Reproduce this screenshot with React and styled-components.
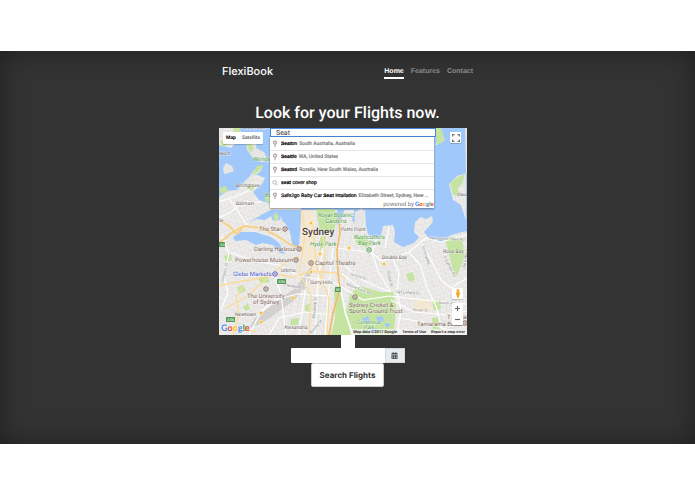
import React, { useState } from 'react';
import styled, { createGlobalStyle } from 'styled-components';
import { FaCalendarAlt } from 'react-icons/fa';

const GlobalStyle = createGlobalStyle`
  * {
    box-sizing: border-box;
  }

  body {
    margin: 0;
    background: #ffffff;
    font-family: Roboto, "Liberation Sans", sans-serif;
    text-rendering: geometricPrecision;
  }

  button, input {
    font-family: inherit;
    text-rendering: inherit;
    margin: 0;
  }
`

const Page = styled.div`
  padding: 51px 0;
`

const Cover = styled.div`
  display: flex;
  justify-content: center;
  padding: 13px 0 57px;
  background: #333333;
  box-shadow: inset 0 0 28px rgba(0, 0, 0, 0.38);
  color: #ffffff;
`

const Column = styled.div`
  display: flex;
  flex-direction: column;
  width: 100%;
  max-width: 257px;
`

const Header = styled.header`
  display: flex;
  justify-content: space-between;
  align-items: flex-start;
  padding: 0 3px;
  margin-bottom: 24px;
`

const Brand = styled.h3`
  margin: 0;
  font-family: Inter, sans-serif;
  font-size: 11px;
  line-height: 14px;
  font-weight: 500;
`

const Nav = styled.nav`
  display: flex;
  gap: 7px;
`

const NavItem = styled.a`
  padding: 3px 0 1px;
  border-bottom: 2px solid ${props => props.$active ? '#ffffff' : 'transparent'};
  color: ${props => props.$active ? '#ffffff' : '#8a8a8a'};
  font-family: "Liberation Sans", Arial, sans-serif;
  font-size: 7px;
  line-height: 9px;
  font-weight: 700;
  text-decoration: none;
`

const Title = styled.h1`
  margin: 0;
  padding-bottom: 5px;
  font-size: 16px;
  line-height: 20px;
  font-weight: 500;
  text-align: center;
`

const MapBox = styled.div`
  position: relative;
  width: 100%;
  max-width: 248px;
  overflow: hidden;

  > svg {
    display: block;
    width: 100%;
  }
`

const MapLabel = styled.text`
  font-family: Roboto, sans-serif;
  font-size: ${props => props.$size || 6}px;
  font-weight: ${props => props.$bold ? 500 : 400};
  font-style: ${props => props.$park ? 'italic' : 'normal'};
  fill: ${props => props.$color || '#6b5f57'};
  stroke: rgba(255, 255, 255, 0.6);
  stroke-width: 1px;
  paint-order: stroke;
`

const Control = styled.div`
  position: absolute;
  display: flex;
  background: #ffffff;
  border-radius: 1px;
  box-shadow: 0 1px 1px rgba(0, 0, 0, 0.2);
`

const MapTypes = styled(Control)`
  top: 4px;
  left: 4px;
`

const Corner = styled(Control)`
  top: 4px;
  right: 6px;
`

const SideControls = styled.div`
  position: absolute;
  right: 4px;
  bottom: 10px;
  display: flex;
  flex-direction: column;
  gap: 4px;

  > div {
    position: static;
    flex-direction: column;
  }
`

const TypeButton = styled.button`
  height: 12px;
  padding: 0 3px;
  border: 0;
  background: none;
  color: ${props => props.$active ? '#000000' : '#565656'};
  font-size: 5px;
  font-weight: ${props => props.$active ? 700 : 500};
`

const IconButton = styled.button`
  display: flex;
  align-items: center;
  justify-content: center;
  width: 11px;
  height: 11px;
  padding: 0;
  border: 0;
  background: none;
`

const Legal = styled.div`
  position: absolute;
  right: 0;
  bottom: 0;
  display: flex;
  gap: 5px;
  padding: 0 2px;
  background: rgba(245, 245, 245, 0.7);
  color: #333333;
  font-size: 4px;
  line-height: 6px;
  font-weight: 700;
  white-space: nowrap;

  a {
    color: inherit;
    text-decoration: none;
  }
`

const MapLogo = styled.div`
  position: absolute;
  left: 2px;
  bottom: 0;
`

const Logo = styled.span`
  font-family: Lato, sans-serif;
  font-size: ${props => props.$size}px;
  line-height: ${props => props.$size + 2}px;
  font-weight: 700;
  text-shadow: ${props => props.$halo ? '0 0 1px #ffffff, 0 0 2px #ffffff' : 'none'};
`

const Letter = styled.span`
  color: ${props => props.$color};
`

const Autocomplete = styled.div`
  position: absolute;
  top: 0;
  left: 51px;
  width: 166px;
`

const PlaceInput = styled.input`
  display: block;
  width: 100%;
  height: 9px;
  padding: 0 5px;
  border: 1px solid #4285d8;
  border-radius: 0;
  outline: 0;
  background: #ffffff;
  color: #333333;
  font-size: 7px;
  line-height: 7px;
`

const Suggestions = styled.div`
  margin-right: 2px;
  padding-top: 1px;
  background: #ffffff;
  box-shadow: 0 1px 2px rgba(0, 0, 0, 0.4);
`

const List = styled.ul`
  margin: 0;
  padding: 0;
  list-style: none;
`

const Suggestion = styled.li`
  display: flex;
  align-items: center;
  gap: 3px;
  height: 13px;
  padding: 0 1px 0 2px;
  border-bottom: 1px solid #e6e6e6;
  color: #000000;
  font-family: "Liberation Sans", Arial, sans-serif;
  font-size: 5px;

  &:last-child {
    border-bottom: 0;
    height: 12px;
  }

  svg {
    flex: none;
  }
`

const SuggestionText = styled.span`
  overflow: hidden;
  white-space: nowrap;
  -webkit-text-stroke: 0.2px currentColor;

  small {
    margin-left: 2px;
    color: #808080;
    font-family: Roboto, sans-serif;
    font-size: 5px;
  }
`

const Powered = styled.div`
  display: flex;
  justify-content: flex-end;
  align-items: center;
  gap: 1px;
  height: 6px;
  color: #777777;
  font-size: 6px;
  line-height: 6px;
`

const Form = styled.form`
  display: flex;
  flex-direction: column;
  align-items: center;
`

const SmallInput = styled.input`
  width: 14px;
  height: 13px;
  padding: 0;
  border: 0;
  background: #ffffff;
`

const DateGroup = styled.div`
  display: flex;
  width: 114px;
  height: 15px;
  border-radius: 1px;
  overflow: hidden;
`

const DateInput = styled.input`
  flex: 1;
  min-width: 0;
  padding: 0 4px;
  border: 0;
  background: #ffffff;
  font-size: 6px;
`

const DateButton = styled.button`
  display: flex;
  align-items: center;
  justify-content: center;
  width: 20px;
  padding: 0;
  border: 1px solid #d5d8db;
  background: #e9ecef;
  color: #495057;
`

const SearchButton = styled.button`
  height: 24px;
  padding: 0 8px;
  border: 1px solid #cccccc;
  border-radius: 2px;
  background: #ffffff;
  color: #333333;
  font-family: Inter, sans-serif;
  font-size: 8px;
  font-weight: 700;
  white-space: nowrap;
`

const letters = [
  ['G', '#4285f4'],
  ['o', '#ea4335'],
  ['o', '#fbbc05'],
  ['g', '#4285f4'],
  ['l', '#34a853'],
  ['e', '#ea4335'],
]

const GoogleLogo = ({ size, halo }) => (
  <Logo $size={size} $halo={halo}>
    {letters.map(([char, color], i) => <Letter key={i} $color={color}>{char}</Letter>)}
  </Logo>
)

const suggestions = [
  { icon: 'pin', match: 'Seat', after: 'on', place: 'South Australia, Australia' },
  { icon: 'pin', match: 'Seat', after: 'tle', place: 'WA, United States' },
  { icon: 'pin', match: 'Seat', after: 'ed', place: 'Rozelle, New South Wales, Australia' },
  { icon: 'search', match: 'seat', after: ' cover shop' },
  { icon: 'pin', before: 'Safe2go Baby Car ', match: 'Seat', after: ' Intallation', place: 'Elizabeth Street, Sydney, New ...' },
]

const brown = '#7d5f54'
const green = '#4c9a4a'

const labels = [
  { x: -3, y: 27, text: 'olwich', size: 5 },
  { x: 34, y: 33, text: 'Wendy', color: green, park: true },
  { x: 46, y: 69, text: 'Ba', color: green, park: true },
  { x: 17, y: 59, text: 'Birchgrove', size: 5 },
  { x: 17, y: 77, text: 'Balmain', size: 5 },
  { x: -2, y: 94, text: 'ille', size: 5 },
  { x: 24, y: 1, text: 'Greenwich', size: 5 },
  { x: 238, y: 68, text: 'Vaucluse', size: 5 },
  { x: 99, y: 89, text: 'Royal Botanic', size: 6, color: green, park: true },
  { x: 106, y: 95, text: 'Gardens', size: 6, color: green, park: true },
  { x: 40, y: 103, text: 'The Star', color: brown },
  { x: 83, y: 107, text: 'Sydney', size: 10, color: '#4a4038', bold: true },
  { x: 122, y: 103, text: 'Potts Point', size: 5 },
  { x: 135, y: 111, text: 'Rushcutters', size: 6, color: green, park: true },
  { x: 139, y: 117, text: 'Bay Park', size: 6, color: green, park: true },
  { x: 91, y: 118, text: 'Hyde Park', size: 6, color: green, park: true },
  { x: 35, y: 123, text: 'Darling Harbour', color: brown },
  { x: 16, y: 134, text: 'Powerhouse Museum', color: brown },
  { x: 62, y: 144, text: 'Ultimo', size: 5 },
  { x: 96, y: 137, text: 'Capitol Theatre', color: brown },
  { x: 14, y: 148, text: 'Glebe Markets', color: '#4a56d0' },
  { x: 163, y: 131, text: 'Double Bay', size: 5 },
  { x: 224, y: 125, text: 'Rose Bay', size: 5 },
  { x: 91, y: 156, text: 'Surry Hills', size: 5 },
  { x: 28, y: 170, text: 'The University', color: brown },
  { x: 34, y: 176, text: 'of Sydney', color: brown },
  { x: 16, y: 188, text: 'Newtown', size: 5 },
  { x: 65, y: 201, text: 'Alexandria', size: 5 },
  { x: 130, y: 179, text: 'Sydney Cricket &', color: brown },
  { x: 130, y: 185, text: 'Sports Ground Trust', color: brown },
  { x: 138, y: 196, text: 'Centennial', size: 5, color: green },
  { x: 145, y: 201, text: 'Park', size: 5, color: green },
  { x: 198, y: 198, text: 'Tamarama Beach', color: brown },
  { x: 228, y: 191, text: 'T', color: brown },
  { x: 244, y: 191, text: 'ar', color: brown },
]

const streets = [
  { x: 65, y: 158, turn: 10, text: 'Cleveland St' },
  { x: 96, y: 190, turn: -84, text: 'Elizabeth St' },
  { x: 92, y: 206, turn: -48, text: 'Bourke St' },
  { x: 131, y: 147, turn: 18, text: 'Oxford St' },
  { x: 127, y: 157, turn: 22, text: 'Moore Park Rd' },
  { x: 177, y: 165, turn: 4, text: 'Sef Enfield Dr' },
  { x: 194, y: 183, turn: 3, text: 'Birrell St' },
  { x: 220, y: 176, turn: 2, text: 'Bondi Rd' },
  { x: 168, y: 143, turn: 78, text: 'Ocean St' },
  { x: 203, y: 118, turn: 74, text: 'Victoria Rd' },
  { x: 224, y: 129, turn: 62, text: "O'Sullivan Rd" },
  { x: 210, y: 111, turn: 3, text: 'New South Head Rd' },
  { x: 4, y: 156, turn: -76, text: 'Johnston St' },
  { x: 246, y: 141, turn: -80, text: 'Old S Head' },
]

const pois = [
  [66, 101, brown],
  [80, 121, brown],
  [77, 132, brown],
  [92, 135, brown],
  [56, 146, '#4a56d0'],
  [47, 161, brown],
  [136, 169, brown],
  [246, 195, brown],
  [150, 122, '#4c9a4a'],
]

const stations = [[92, 95], [130, 120], [101, 126], [165, 136], [92, 144], [74, 170], [42, 185], [42, 194]]

const shields = [[0, 114, 'A4'], [58, 151, 'A36'], [116, 159, 'M1'], [7, 189, 'A36'], [24, 198, 'M1']]

const SydneyMap = () => (
  <svg viewBox="0 0 248 207" aria-hidden="true">
    <defs>
      <pattern id="inner" width="7" height="8" patternUnits="userSpaceOnUse" patternTransform="rotate(8)">
        <path d="M0 0H7M0 0V8M3 3V8M0 4H3" stroke="#f8f8f7" strokeWidth="0.7" fill="none" />
      </pattern>
      <pattern id="west" width="8" height="7" patternUnits="userSpaceOnUse" patternTransform="rotate(-24)">
        <path d="M0 0H8M0 0V7M4 0V4M4 4H8" stroke="#f8f8f7" strokeWidth="0.7" fill="none" />
      </pattern>
      <pattern id="east" width="7" height="9" patternUnits="userSpaceOnUse" patternTransform="rotate(-14)">
        <path d="M0 0H7M0 0V9M4 0V6M4 6H7" stroke="#f8f8f7" strokeWidth="0.7" fill="none" />
      </pattern>
    </defs>

    <rect width="248" height="207" fill="#e6e5e3" />
    <path d="M0 0H80V100L62 207H0Z" fill="url(#west)" />
    <path d="M80 60L150 90L134 207H62L80 100Z" fill="url(#inner)" />
    <path d="M150 60H248V207H134Z" fill="url(#east)" />

    {/* built-up blocks */}
    <g fill="#f5e8d2">
      <path d="M82 82L95 82L98 138L90 150L82 120Z" />
      <path d="M195 173L208 171L214 180L204 187L195 182Z" />
      <path d="M90 152L104 150L103 166L92 164Z" opacity="0.6" />
    </g>
    <path d="M94 136L76 160L60 172L36 190L30 200L42 196L76 172L90 152Z" fill="#d2d1cf" />

    {/* harbour */}
    <g fill="#a0c8fb">
      <path d="M18 0H222L220 10L216 17V82H52L44 86L29 95L38 91L46 92L52 88L54 93L60 92L66 95L71 104L73 116L76 120L80 117L82 92L82 80H52V76L40 72L34 64L43 56L46 50L36 46L26 54L18 62L8 63L0 69V17L12 20L20 11Z" />
      <path d="M222 0H246L247 45L238 48L230 56L234 72L242 77L247 92V103L232 107L222 114L209 109L205 104L214 94L213 88L207 91L202 89L196 94L195 104L200 109L195 115L184 119L175 114L176 104L174 97L164 98L162 108L154 110L149 106L147 97L146 80H210V20L224 14Z" />
      <path d="M14 109L22 104L36 104L52 109L60 115L66 126L61 125L54 117L44 115L37 117L27 112L16 113Z" />
      <path d="M119 80H126L122 92L118 97L117 90ZM136 80H140L136 96L133 92Z" />
      <path d="M247 45H248V104H247Z" />
    </g>
    <g fill="#e6e5e3">
      <path d="M27 13L38 13L37 20L45 24L49 33L42 34L34 30L28 22Z" />
      <path d="M4 40L7 35L13 38L15 43L10 45L5 46Z" />
      <path d="M20 59L30 49L36 41L43 38L42 43L34 49L31 60Z" />
      <path d="M54 96L56 90L58 100ZM60 97L62 88L65 98Z" />
      <path d="M136 84L143 80L146 89L142 105L135 104Z" />
    </g>

    {/* parks */}
    <g fill="#c5e4a2">
      <path d="M14 0H21L24 12L19 13L15 7Z" />
      <path d="M1 13L8 10L10 16L3 19Z" />
      <path d="M26 13L31 12L35 21L31 24Z" />
      <path d="M38 38L45 37L40 43L33 48Z" />
      <path d="M31 56L36 58L33 63L27 60Z" />
      <path d="M0 60L7 58L9 63L2 66Z" />
      <path d="M46 69L52 66V76L47 73Z" />
      <path d="M57 84L60 90L57 94L54 88Z" />
      <path d="M97 81L115 81L118 89L115 103L107 105L100 100Z" />
      <path d="M101 109L107 108L106 118L101 122Z" />
      <path d="M136 108L146 108L153 117L146 119L137 115Z" />
      <path d="M216 0L222 0L226 12L218 17Z" />
      <path d="M231 55L239 49L246 46L243 56L239 60L240 68L234 67Z" />
      <path d="M226 111L234 109L243 112L246 128L238 148L233 140L230 125Z" />
      <path d="M18 159L24 157L27 162L20 166Z" />
      <path d="M38 150L48 147L51 154L42 155Z" />
      <path d="M115 160L121 164L127 184L132 207H112L116 190Z" />
      <path d="M132 165L140 158L152 161L160 164L174 164L177 177L175 207H134L127 184Z" />
      <path d="M213 190L220 189L222 202L214 203Z" />
      <path d="M213 173L221 172L222 181L215 183Z" />
      <path d="M187 146L194 144L196 152L190 154Z" />
      <path d="M72 191L80 190L79 197L71 197Z" />
      <path d="M86 177L91 176L90 184L86 183Z" />
      <path d="M5 128L12 126L13 132L7 134ZM24 178L29 176L31 181L26 183Z" />
    </g>
    <g fill="#a0c8fb">
      <path d="M143 191L149 188L151 194L146 195ZM157 189L163 188L165 192L160 196ZM165 195L172 196L168 200ZM150 201L158 200L157 205L151 205Z" />
    </g>

    {/* local roads */}
    <g fill="none" stroke="#ffffff" strokeWidth="1.2">
      <path d="M0 90L12 84L24 74L42 74M10 70L22 88L28 97M0 74L15 69L31 62" />
      <path d="M3 108L10 125L5 148L9 165L2 182" />
      <path d="M12 125L35 133L60 137L80 148L112 153L128 162L144 172L170 168L205 172L248 176" />
      <path d="M55 145L62 166L67 207M88 150L84 178L80 207M104 120L99 150L96 207M114 120L110 160L106 207" />
      <path d="M118 120L140 123L153 125L163 133L175 130L190 124L207 110L222 114L248 107" />
      <path d="M190 124L202 138L208 160L217 178L224 207M203 116L212 132L222 152L232 160L248 150" />
      <path d="M158 110L153 125L160 145L172 164M170 99L166 120M174 131L180 145L178 164L182 182L178 207" />
      <path d="M126 138L140 150L154 157L172 164M123 146L144 162L152 166" />
      <path d="M172 172L195 184L228 187L248 183M178 190L205 194L230 202" />
      <path d="M30 207L42 184L56 172L78 166L112 168M50 207L60 190L86 184L112 187" />
      <path d="M119 145L126 184L134 207" strokeWidth="1.6" />
    </g>

    {/* main roads */}
    <g fill="none" stroke="#fbdc9a" strokeWidth="1.3">
      <path d="M0 158L18 154L37 151L56 146L74 149L92 143L116 145L126 150" />
      <path d="M7 180L28 168L50 149L66 135L80 128" />
      <path d="M83 82L86 104L84 122L80 144L92 168L90 207" />
      <path d="M94 96L95 115L98 140L110 170L108 207" />
      <path d="M14 207L20 186L17 170L24 158M0 203L16 199L38 204" />
      <path d="M104 106L106 128L102 150" />
    </g>
    <g fill="none" stroke="#f8cf7e" strokeWidth="1.8">
      <path d="M0 115L14 104L25 98L43 100L58 108L72 117L83 120" />
      <path d="M0 92L10 98L18 106L25 98" />
      <path d="M120 90L121 105L118 122L119 144L121 160L114 185L110 207" />
    </g>
    <path d="M120 90L121 105L118 122L119 144L121 160L114 185L110 207" fill="none" stroke="#eca968" strokeWidth="0.8" />

    {streets.map(({ x, y, turn, text }) => (
      <MapLabel key={text} x={x} y={y} transform={`rotate(${turn} ${x} ${y})`} $size={4} $color="#8b8a88">{text}</MapLabel>
    ))}

    {stations.map(([x, y]) => <circle key={`${x}-${y}`} cx={x} cy={y} r="1.8" fill="#f6bd42" stroke="#fff3d2" strokeWidth="0.6" />)}

    {pois.map(([x, y, color]) => (
      <g key={`${x}-${y}`} fill="none" stroke={color}>
        <circle cx={x} cy={y} r="2.2" fill="#ffffff" />
        <path d={`M${x - 1} ${y}h2`} />
      </g>
    ))}

    {shields.map(([x, y, text]) => (
      <g key={`${x}-${y}`}>
        <rect x={x} y={y} width={text.length * 3} height="5" rx="0.6" fill="#4f9850" />
        <text x={x + 1} y={y + 4} fontSize="4" fontFamily="Roboto, sans-serif" fill="#ffffff">{text}</text>
      </g>
    ))}

    {labels.map(({ x, y, text, size, color, park, bold }) => (
      <MapLabel key={`${text}-${y}`} x={x} y={y} $size={size} $color={color} $park={park} $bold={bold}>{text}</MapLabel>
    ))}
  </svg>
)

const PinIcon = () => (
  <svg width="6" height="8" viewBox="0 0 6 8">
    <circle cx="3" cy="2.6" r="1.5" fill="#ffffff" stroke="#a0a0a0" strokeWidth="1.1" />
    <path d="M3 4.2V7.2" stroke="#a0a0a0" strokeWidth="1" />
  </svg>
)

const SearchIcon = () => (
  <svg width="6" height="8" viewBox="0 0 6 8" fill="none" stroke="#a8a8a8" strokeWidth="0.8">
    <circle cx="2.6" cy="3.4" r="1.8" />
    <path d="M4 4.8L5.8 6.6" />
  </svg>
)

const PlaceSearch = () => {
  const [query, setQuery] = useState('Seat')

  return (
    <Autocomplete>
      <PlaceInput aria-label="Place" value={query} onChange={e => setQuery(e.target.value)} />
      <Suggestions>
        <List>
          {suggestions.map(({ icon, before, match, after, place }) => (
            <Suggestion key={match + after}>
              {icon === 'pin' ? <PinIcon /> : <SearchIcon />}
              <SuggestionText>
                {before}<b>{match}</b>{after}
                {place && <small>{place}</small>}
              </SuggestionText>
            </Suggestion>
          ))}
        </List>
        <Powered>powered by <GoogleLogo size={6} /></Powered>
      </Suggestions>
    </Autocomplete>
  )
}

const MapPanel = () => (
  <MapBox>
    <SydneyMap />
    <MapTypes>
      <TypeButton $active>Map</TypeButton>
      <TypeButton>Satellite</TypeButton>
    </MapTypes>
    <Corner>
      <IconButton aria-label="Full screen">
        <svg width="8" height="8" viewBox="0 0 8 8" fill="none" stroke="#777777" strokeWidth="1.2">
          <path d="M0.6 2.6V0.6H2.6M5.4 0.6H7.4V2.6M7.4 5.4V7.4H5.4M2.6 7.4H0.6V5.4" />
        </svg>
      </IconButton>
    </Corner>
    <SideControls>
      <Control>
        <IconButton aria-label="Street view">
          <svg width="6" height="9" viewBox="0 0 6 9" fill="#f2ad28">
            <circle cx="3" cy="1.6" r="1.5" />
            <path d="M1 3.2H5L4.8 6H4.3L4 8.8H2L1.7 6H1.2Z" />
            <path d="M2.4 3.4H3.6L3 4.6Z" fill="#c98314" />
          </svg>
        </IconButton>
      </Control>
      <Control>
        <IconButton aria-label="Zoom in">
          <svg width="5" height="5" viewBox="0 0 5 5" stroke="#666666" strokeWidth="1.2"><path d="M0 2.5H5M2.5 0V5" /></svg>
        </IconButton>
        <IconButton aria-label="Zoom out">
          <svg width="5" height="5" viewBox="0 0 5 5" stroke="#666666" strokeWidth="1.2"><path d="M0 2.5H5" /></svg>
        </IconButton>
      </Control>
    </SideControls>
    <MapLogo><GoogleLogo size={9} halo /></MapLogo>
    <Legal>
      <span>Map data ©2017 Google</span>
      <a href="#terms">Terms of Use</a>
      <a href="#report">Report a map error</a>
    </Legal>
    <PlaceSearch />
  </MapBox>
)

export default function App() {
  return (
    <Page>
      <GlobalStyle />
      <Cover>
        <Column>
          <Header>
            <Brand>FlexiBook</Brand>
            <Nav>
              <NavItem href="#home" $active>Home</NavItem>
              <NavItem href="#features">Features</NavItem>
              <NavItem href="#contact">Contact</NavItem>
            </Nav>
          </Header>
          <main>
            <Title>Look for your Flights now.</Title>
            <MapPanel />
            <Form onSubmit={e => e.preventDefault()}>
              <SmallInput aria-label="Seats" />
              <DateGroup>
                <DateInput aria-label="Date" />
                <DateButton type="button" aria-label="Open calendar">
                  <FaCalendarAlt size={7} />
                </DateButton>
              </DateGroup>
              <SearchButton type="submit">Search Flights</SearchButton>
            </Form>
          </main>
        </Column>
      </Cover>
    </Page>
  )
}
